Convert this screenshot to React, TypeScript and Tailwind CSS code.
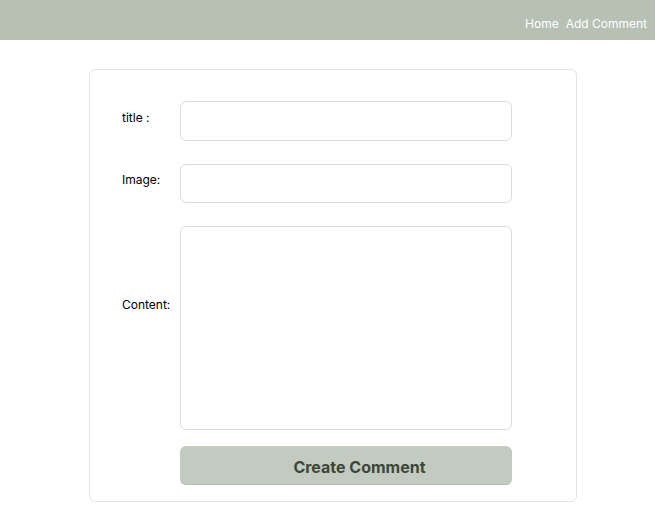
import React from "react";

function App() {
  return (
    <div className="min-h-[532px] bg-white font-['Inter',sans-serif] text-[12px] text-black">
      <nav className="h-10 bg-[#b6c0b3] flex items-center justify-end pr-2 pt-[7px] gap-[7px] text-white">
        <a href="#">Home</a>
        <a href="#">Add Comment</a>
      </nav>

      <div className="pt-[29px] pl-[89px]">
        <form className="w-[488px] h-[433px] border border-[#e3e3e3] rounded-md pt-[31px] pl-[32px]">
          <div className="flex">
            <label className="w-[58px] pt-[8px]">title :</label>
            <input
              type="text"
              className="w-[332px] h-[40px] border border-[#dcdcdc] rounded-md outline-none px-2"
            />
          </div>
          <div className="flex mt-[23px]">
            <label className="w-[58px] pt-[7px]">Image:</label>
            <input
              type="text"
              className="w-[332px] h-[39px] border border-[#dcdcdc] rounded-md outline-none px-2"
            />
          </div>
          <div className="flex mt-[23px]">
            <label className="w-[58px] pt-[70px]">Content:</label>
            <textarea className="w-[332px] h-[204px] border border-[#dcdcdc] rounded-md outline-none p-2 resize-none"></textarea>
          </div>
          <div className="flex mt-[16px] pl-[58px]">
            <button
              type="submit"
              className="w-[332px] h-[39px] rounded-md bg-[#c3cac0] text-[#3d4738] text-[16px] font-bold border-b border-[#b3bab0] pl-[27px] pt-[3px]"
            >
              Create Comment
            </button>
          </div>
        </form>
      </div>
    </div>
  );
}

export default App;
